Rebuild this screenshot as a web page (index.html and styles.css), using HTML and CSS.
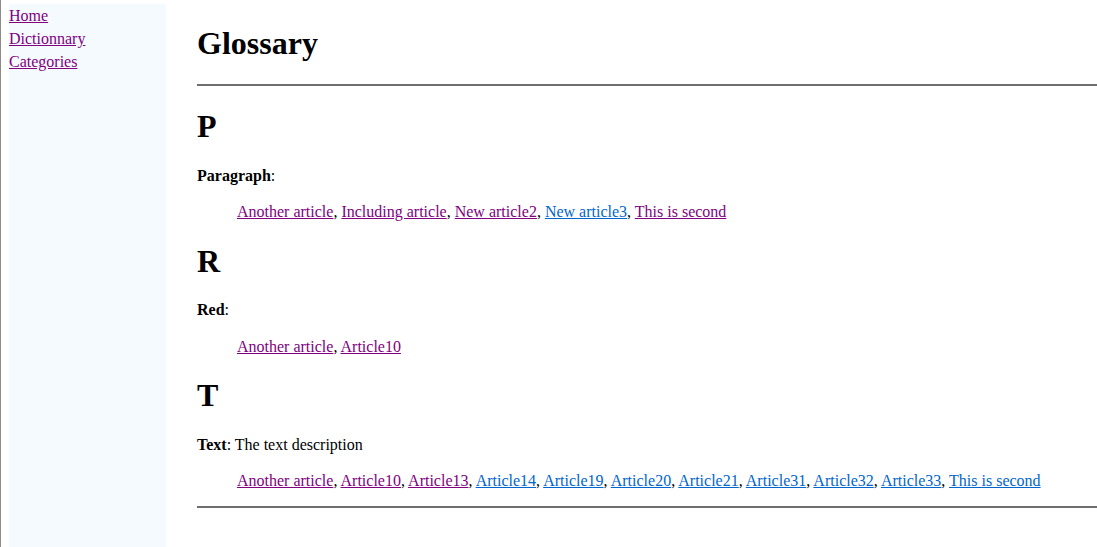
FILE: index.html
```html
<!DOCTYPE html>
<html>
<head>
<meta charset="utf-8">
<title>Glossary</title>
<link rel="stylesheet" href="styles.css">
</head>
<body>
<div class="page">
  <nav class="sidebar">
    <a class="nav-link visited" href="#">Home</a>
    <a class="nav-link visited" href="#">Dictionnary</a>
    <a class="nav-link visited" href="#">Categories</a>
  </nav>
  <main class="content">
    <h1 class="title">Glossary</h1>
    <hr class="rule rule-top">
    <h1 class="letter">P</h1>
    <p class="term"><b>Paragraph</b>:</p>
    <blockquote class="refs"><a class="visited" href="#">Another article</a>, <a class="visited" href="#">Including article</a>, <a class="visited" href="#">New article2</a>, <a class="fresh" href="#">New article3</a>, <a class="visited" href="#">This is second</a></blockquote>
    <h1 class="letter">R</h1>
    <p class="term"><b>Red</b>:</p>
    <blockquote class="refs"><a class="visited" href="#">Another article</a>, <a class="visited" href="#">Article10</a></blockquote>
    <h1 class="letter">T</h1>
    <p class="term"><b>Text</b>: The text description</p>
    <blockquote class="refs"><a class="visited" href="#">Another article</a>, <a class="visited" href="#">Article10</a>, <a class="visited" href="#">Article13</a>, <a class="fresh" href="#">Article14</a>, <a class="fresh" href="#">Article19</a>, <a class="fresh" href="#">Article20</a>, <a class="fresh" href="#">Article21</a>, <a class="fresh" href="#">Article31</a>, <a class="fresh" href="#">Article32</a>, <a class="fresh" href="#">Article33</a>, <a class="fresh" href="#">This is second</a></blockquote>
    <hr class="rule">
  </main>
</div>
</body>
</html>
```
FILE: styles.css
```css
html, body {
  margin: 0;
  padding: 0;
  height: 100%;
}
body {
  font-family: "Liberation Serif", "Times New Roman", serif;
  font-size: 16px;
  color: #000;
  background: #fff;
}
.page {
  display: flex;
  align-items: stretch;
  min-height: 100%;
  border-left: 1px solid #8c8c8c;
  box-sizing: border-box;
}
.sidebar {
  width: 157px;
  margin: 4px 0 0 8px;
  padding-top: 1px;
  background: #f5faff;
  display: flex;
  flex-direction: column;
  flex-shrink: 0;
}
.nav-link {
  display: block;
  line-height: 21px;
  margin-bottom: 2px;
  align-self: flex-start;
}
.content {
  flex: 1;
  margin-left: 31px;
  padding-top: 4px;
  min-width: 0;
}
.title, .letter {
  font-size: 32px;
  font-weight: bold;
  margin: 21.44px 0;
}
.rule {
  margin: 8px 0;
  border: 0;
  height: 2px;
  background: #6e6e6e;
}
.rule-top {
  margin-bottom: 22.5px;
}
.term {
  margin: 16px 0;
}
.refs {
  margin: 18.5px 0 16px 40px;
}
a.visited {
  color: #800080;
}
a.fresh {
  color: #0066cc;
}
```
